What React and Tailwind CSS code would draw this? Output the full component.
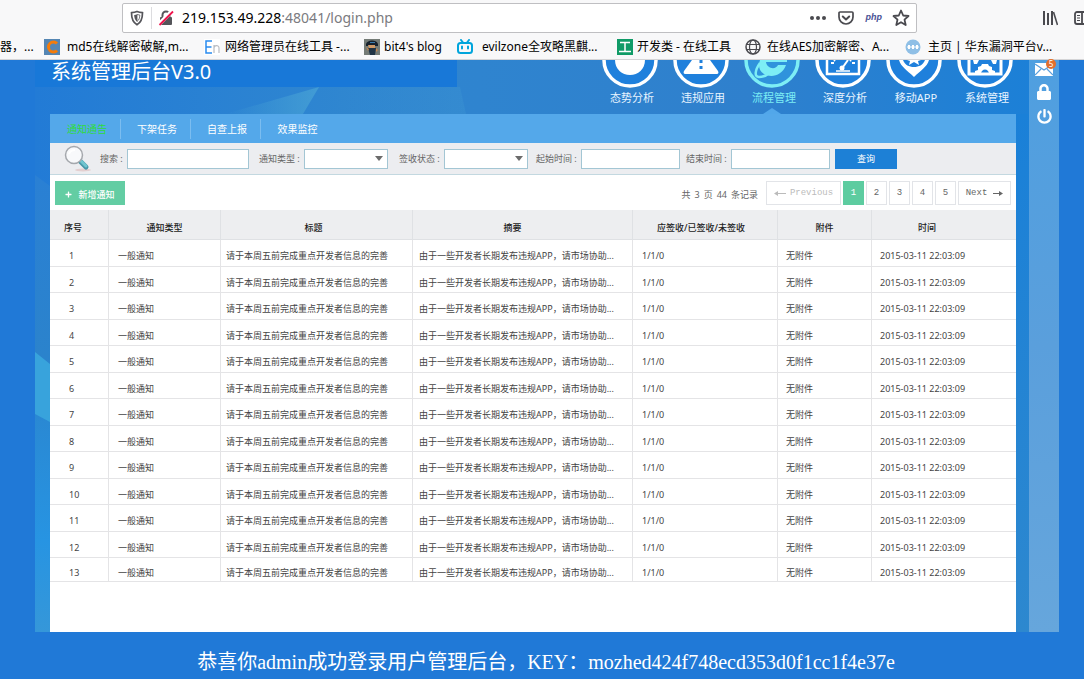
import { useState } from 'react'
import { FaLock, FaPowerOff, FaPlus } from 'react-icons/fa'

const bookmarks = [
  { icon: 'c', title: 'md5在线解密破解,m...', className: 'w-40 gap-[7px]' },
  { icon: 'en', title: '网络管理员在线工具 -...', className: 'w-40 gap-[5px]' },
  { icon: 'blog', title: "bit4's blog", className: 'w-[93px] gap-1' },
  { icon: 'tv', title: 'evilzone全攻略黑麒...', className: 'w-40 gap-[9px]' },
  { icon: 'gong', title: '开发类 - 在线工具', className: 'w-32 gap-1' },
  { icon: 'globe', title: '在线AES加密解密、A...', className: 'w-40 gap-[6px]' },
  { icon: 'dots', title: '主页 | 华东漏洞平台v...', className: 'w-40 gap-[7px]' },
]

const modules = [
  { icon: 'trend', label: '态势分析' },
  { icon: 'warning', label: '违规应用' },
  { icon: 'flow', label: '流程管理' },
  { icon: 'gauge', label: '深度分析' },
  { icon: 'mobile', label: '移动APP' },
  { icon: 'system', label: '系统管理' },
]

const tabs = ['通知通告', '下架任务', '自查上报', '效果监控']

const columns = [
  { title: '序号', className: 'w-[58px] pl-[14px] text-left' },
  { title: '通知类型', className: 'w-[112px] border-l' },
  { title: '标题', className: 'w-[192px] border-l pr-[6px]' },
  { title: '摘要', className: 'w-[220px] border-l pr-5' },
  { title: '应签收/已签收/未签收', className: 'w-[145px] border-l pr-2' },
  { title: '附件', className: 'w-[94px] border-l' },
  { title: '时间', className: 'border-l pr-[34px]' },
]

const notices = Array.from({ length: 13 }, (_, i) => ({
  id: i + 1,
  type: '一般通知',
  title: '请于本周五前完成重点开发者信息的完善',
  summary: '由于一些开发者长期发布违规APP，请市场协助...',
  signed: '1/1/0',
  attachment: '无附件',
  time: '2015-03-11 22:03:09',
}))

function BookmarkIcon({ name }) {
  return (
    <svg className="size-4 shrink-0" viewBox="0 0 16 16" fill="none">
      {name === 'c' && (
        <>
          <rect width="16" height="16" fill="#5586b3" />
          <path d="M13 4.500A4.800 4.800 0 0 0 9.500 3a5 5 0 0 0 0 10A4.800 4.800 0 0 0 13 11.500" stroke="#f57c0a" strokeWidth="3" />
        </>
      )}
      {name === 'en' && (
        <>
          <rect width="16" height="16" fill="#fff" />
          <path d="M8 2H2v12h6M2 8h5.500" stroke="#2a8cf0" strokeWidth="1.500" />
          <path d="M10 14V6M10 9c0-3 5-3.500 5 0v5" stroke="#b9bcc2" strokeWidth="1.200" />
        </>
      )}
      {name === 'blog' && (
        <>
          <rect width="16" height="16" fill="#747b76" />
          <path d="M2 5c1-4 10-5 12 0v2H2z" fill="#17222e" />
          <path d="M4 6h7v3H5z" fill="#d09a67" />
          <path d="M4 9h8l-1 7H6z" fill="#1f3345" />
          <path d="M2 8l3 2-1 2zM12 9l2 2-2 2z" fill="#c4854f" />
          <path d="M6 3h5v1H6z" fill="#3a7bad" />
        </>
      )}
      {name === 'tv' && (
        <>
          <rect x="1" y="4" width="14" height="10" rx="2.500" stroke="#00a5dc" strokeWidth="2" />
          <path d="M4 1l2 2.500M12 1l-2 2.500M5 7.500v2M11 7.500v2" stroke="#00a5dc" strokeWidth="2" strokeLinecap="round" />
        </>
      )}
      {name === 'gong' && (
        <>
          <rect width="16" height="16" fill="#109b67" />
          <path d="M3 3.500h10M8 3.500v9M2 12.500h12" stroke="#fff" strokeWidth="1.500" />
        </>
      )}
      {name === 'globe' && (
        <>
          <circle cx="8" cy="8" r="7" stroke="#4a4a4f" strokeWidth="1.500" />
          <ellipse cx="8" cy="8" rx="3.500" ry="7" stroke="#4a4a4f" strokeWidth="1.200" />
          <path d="M1.500 5.500h13M1.500 10.500h13" stroke="#4a4a4f" strokeWidth="1.200" />
        </>
      )}
      {name === 'dots' && (
        <>
          <circle cx="8" cy="8" r="7.500" fill="#8fbfe6" />
          <path d="M2 8h12" stroke="#fff" strokeWidth="1" />
          <path d="M4 6v4M8 6v4M12 6v4" stroke="#fff" strokeWidth="2" />
        </>
      )}
    </svg>
  )
}

// only the lower half of each round badge is on screen
function ModuleIcon({ name }) {
  const color = name === 'flow' ? '#7deef5' : '#fff'
  return (
    <svg className="block h-7 w-14" viewBox="0 0 56 28" fill="none">
      <circle cx="28" cy="0" r="26" fill={name === 'flow' ? '#2f93dc' : '#1f80dc'} stroke={color} strokeWidth="3.500" />
      {name === 'trend' && <path d="M13 0h30c0 9-7 15-15 15S13 9 13 0z" fill={color} />}
      {name === 'warning' && (
        <>
          <path d="M19 0h18l8 11c1 2 0 3-1 3H12c-1 0-2-1-1-3z" fill={color} />
          <path d="M28 0v3M28 6v3" stroke="#1f80dc" strokeWidth="3" />
        </>
      )}
      {name === 'flow' && (
        <>
          <path d="M16 0h27v2H22c1 7 10 8 12 3h8c-4 11-15 13-22 9-5-3-6-8-4-14z" fill={color} />
          <path d="M16 3c-5 7-6 14-1 14 4 0 8-2 10-4" stroke={color} strokeWidth="2.500" />
        </>
      )}
      {name === 'gauge' && (
        <>
          <path d="M12 0v14h32V0" stroke={color} strokeWidth="2.500" />
          <path d="M16 3h3M37 3h3M19 0l1 1M36 0l-1 1" stroke={color} strokeWidth="2" />
          <path d="M33 0l-5 7" stroke={color} strokeWidth="2" />
          <circle cx="27" cy="8" r="2.500" fill={color} />
          <path d="M21 11h14" stroke={color} strokeWidth="1.500" />
        </>
      )}
      {name === 'mobile' && (
        <>
          <path d="M13 0c2 7 8 10 15 17C35 10 41 7 43 0h-4c-2 5-6 7-11 7S19 5 17 0z" fill={color} />
          <path d="M21 0h14l-3 1 1 4-5-3-5 3 1-4z" fill={color} />
        </>
      )}
      {name === 'system' && (
        <>
          <path d="M12 0v14h32V0" stroke={color} strokeWidth="3" />
          <path d="M18 14v-3l3-1v-3l3-1 1-2h6l1 2 3 1v3l3 1v3h-6c0-6-8-6-8 0z" fill={color} />
          <path d="M16 0h6l-2 4h-3zM34 0h6l-1 4h-3z" fill={color} />
        </>
      )}
    </svg>
  )
}

function BrowserBar() {
  return (
    <div className="border-b border-[#d4d4d6] bg-[#f8f8f9] font-['Noto_Sans','Noto_Sans_CJK_SC',sans-serif] text-black">
      <div className="flex h-[35px] items-center overflow-hidden pl-[122px]">
        <div className="flex h-[30px] min-w-0 flex-1 items-center rounded-xs border border-[#bfbfc2] bg-white pr-[6px] pl-[6px]">
          <svg className="size-4 shrink-0" viewBox="0 0 16 16" fill="none">
            <path d="M8 1.500c2 .8 3.500 1 5.500 1.200 0 6-1 9.500-5.500 12-4.500-2.500-5.500-6-5.500-12 2-.2 3.500-.4 5.500-1.200z" stroke="#55555a" strokeWidth="1.700" />
            <path d="M8 4.500v7c-2.200-1.600-2.700-3.500-2.800-6.500z" fill="#55555a" />
            <path d="M8 4.500v7c2.200-1.600 2.700-3.500 2.800-6.500z" stroke="#55555a" strokeWidth=".8" />
          </svg>
          <span className="mx-[6px] h-[22px] w-px bg-[#dcdcdf]" />
          <svg className="size-4 shrink-0" viewBox="0 0 16 16" fill="none">
            <path d="M4.500 8V5a3.500 3.500 0 0 1 7 0v3" stroke="#55555a" strokeWidth="2" />
            <rect x="2" y="7" width="12" height="8" rx="1" fill="#55555a" />
            <path d="M1 14L14 1" stroke="#fff" strokeWidth="4" />
            <path d="M1.500 15L15 1.500" stroke="#f0134d" strokeWidth="1.800" />
          </svg>
          <div
            role="textbox"
            aria-label="地址"
            contentEditable
            suppressContentEditableWarning
            className="ml-2 min-w-0 flex-1 truncate text-sm text-[#7b7b80] outline-none"
          >
            <span className="text-black">219.153.49.228</span>:48041/login.php
          </div>
          <button type="button" aria-label="页面操作" className="mr-3 flex gap-[2px]">
            <span className="size-1 rounded-full bg-[#4a4a4f]" />
            <span className="size-1 rounded-full bg-[#4a4a4f]" />
            <span className="size-1 rounded-full bg-[#4a4a4f]" />
          </button>
          <button type="button" aria-label="保存到 Pocket" className="mr-3">
            <svg className="size-4" viewBox="0 0 16 16" fill="none" stroke="#4a4a4f" strokeWidth="2" strokeLinecap="round" strokeLinejoin="round">
              <path d="M2 2h12a1 1 0 0 1 1 1v4a7 7 0 0 1-14 0V3a1 1 0 0 1 1-1z" strokeWidth="1.700" />
              <path d="M4.800 6.500L8 9.500l3.200-3" />
            </svg>
          </button>
          <span className="mr-[10px] font-['Liberation_Sans',sans-serif] text-[9px] font-bold text-[#4a5295] italic">php</span>
          <button type="button" aria-label="收藏">
            <svg className="size-[18px]" viewBox="0 0 18 18" fill="none" stroke="#4a4a4f" strokeWidth="1.800" strokeLinejoin="round">
              <path d="M9 1.500l2.200 5 5.300.5-4 3.600 1.200 5.400L9 13.200 4.300 16l1.200-5.400-4-3.600 5.300-.5z" />
            </svg>
          </button>
        </div>
        <button type="button" aria-label="书库" className="ml-[125px]">
          <svg className="size-4" viewBox="0 0 16 16" stroke="#4a4a4f" strokeWidth="2">
            <path d="M2 1v14M6 3v12M10 1v14" />
            <path d="M11.500 2l4 13" strokeWidth="1.600" />
          </svg>
        </button>
        <button type="button" aria-label="侧栏" className="ml-4">
          <svg className="h-4 w-[10px]" viewBox="0 0 10 16" fill="none" stroke="#4a4a4f">
            <path d="M10 2H3a2 2 0 0 0-2 2v8a2 2 0 0 0 2 2h7M8 2v12" strokeWidth="1.800" />
            <path d="M3 5.500h3M3 8h3M3 10.500h3" strokeWidth="1.200" />
          </svg>
        </button>
      </div>
      <nav className="flex h-6 items-center overflow-hidden text-xs whitespace-nowrap">
        <a href="#" className="w-11 shrink-0 truncate [text-overflow:clip]">器，...</a>
        {bookmarks.map((b) => (
          <a key={b.icon} href="#" className={`flex shrink-0 items-center ${b.className}`}>
            <BookmarkIcon name={b.icon} />
            {b.title}
          </a>
        ))}
      </nav>
    </div>
  )
}

function Header() {
  return (
    <header className="flex h-[54px] items-start justify-between pr-[3px]">
      <h1 className="h-[27px] w-[422px] bg-[#1878d8] pl-4 text-xl leading-6 text-white">系统管理后台V3.0</h1>
      <nav className="flex gap-[15px]">
        {modules.map((m) => (
          <a
            key={m.icon}
            href="#"
            className={`relative flex h-[54px] w-14 flex-col items-center text-[11px] leading-5 ${m.icon === 'flow' ? 'text-[#7deef5]' : 'text-[#e8f4ff]'}`}
          >
            <ModuleIcon name={m.icon} />
            <span className="pl-1 whitespace-nowrap">{m.label}</span>
            {m.icon === 'flow' && (
              <svg className="absolute bottom-0 left-1/2 h-[6px] w-[18px] -translate-x-1/2" viewBox="0 0 18 6">
                <path d="M0 6l9-6 9 6z" fill="#52a7ea" />
              </svg>
            )}
          </a>
        ))}
      </nav>
    </header>
  )
}

function SelectField({ id, label }) {
  return (
    <div className="flex items-center">
      <label htmlFor={id} className="w-[45px]">{label} :</label>
      <div className="relative">
        <select id={id} className="h-5 w-[84px] appearance-none border border-[#a3c6d4] bg-white px-1">
          <option value=""></option>
        </select>
        <svg className="pointer-events-none absolute top-[7px] right-[5px] h-[5px] w-2" viewBox="0 0 8 5">
          <path d="M0 0h8L4 5z" fill="#6b6b6b" />
        </svg>
      </div>
    </div>
  )
}

function DateField({ id, label }) {
  return (
    <div className="flex items-center">
      <label htmlFor={id} className="w-[45px]">{label} :</label>
      <input id={id} type="text" className="h-5 w-[99px] border border-[#a3c6d4] bg-white px-1" />
    </div>
  )
}

function SearchBar() {
  return (
    <form
      className="flex h-8 items-center border-b border-[#c3d8e0] bg-[#ecedf0] pl-[14px] text-[9px] whitespace-nowrap text-[#666]"
      onSubmit={(e) => e.preventDefault()}
    >
      <svg className="h-[27px] w-7 shrink-0" viewBox="0 0 28 27" fill="none">
        <ellipse cx="19" cy="25" rx="8" ry="1.500" fill="#e3cfd0" />
        <path d="M15 15l7 7" stroke="#4797a8" strokeWidth="5" strokeLinecap="round" />
        <path d="M15 14l7 7" stroke="#6fc4cf" strokeWidth="3" strokeLinecap="round" />
        <circle cx="10" cy="10" r="8.500" fill="#f8f9fb" stroke="#a5a8ad" strokeWidth="1.500" />
        <path d="M5 9c1-3 3-4 6-4" stroke="#fff" strokeWidth="2" />
      </svg>
      <div className="mr-[10px] ml-2 flex items-center">
        <label htmlFor="keyword" className="w-[27px]">搜索 :</label>
        <input id="keyword" type="text" className="h-5 w-[122px] border border-[#a3c6d4] bg-white px-1" />
      </div>
      <div className="flex items-center gap-[11px]">
        <SelectField id="type" label="通知类型" />
        <SelectField id="status" label="签收状态" />
      </div>
      <div className="ml-2 flex items-center gap-[6px]">
        <DateField id="start" label="起始时间" />
        <DateField id="end" label="结束时间" />
      </div>
      <button type="submit" className="ml-[5px] h-5 w-[62px] bg-[#1d80d6] text-white">查询</button>
    </form>
  )
}

function Pagination({ page, setPage }) {
  return (
    <div className="flex items-center gap-[2px] font-['Liberation_Mono',monospace] text-[9px] text-[#666]">
      <p className="mr-[6px] flex gap-1 pt-1 font-['Noto_Sans','Noto_Sans_CJK_SC',sans-serif]">
        <span>共</span>
        <span>3</span>
        <span>页</span>
        <span>44</span>
        <span>条记录</span>
      </p>
      <button type="button" className="flex h-6 w-[75px] items-center justify-center gap-1 border border-[#e2e4e8] pt-[2px] text-[#bbb]">
        <svg className="h-[5px] w-3" viewBox="0 0 12 5" fill="currentColor"><path d="M0 2.500L4 0v2h8v1H4v2z" /></svg>
        Previous
      </button>
      {[1, 2, 3, 4, 5].map((n) => (
        <button
          key={n}
          type="button"
          onClick={() => setPage(n)}
          className={`h-6 w-[21px] border pt-[2px] ${n === page ? 'border-[#5dcca0] bg-[#5dcca0] text-white' : 'border-[#e2e4e8]'}`}
        >
          {n}
        </button>
      ))}
      <button type="button" className="flex h-6 w-[53px] items-center justify-center gap-[6px] border border-[#e2e4e8] pt-[2px]">
        Next
        <svg className="h-[5px] w-[10px]" viewBox="0 0 10 5" fill="currentColor"><path d="M10 2.500L6 0v2H0v1h6v2z" /></svg>
      </button>
    </div>
  )
}

function NoticeTable() {
  return (
    <table className="w-full table-fixed border-separate border-spacing-0 text-[9px] leading-[14px] text-[#444]">
      <thead>
        <tr className="h-[30px] bg-[#edeef0] text-[#222]">
          {columns.map((c) => (
            <th key={c.title} className={`border-b border-[#dfe1e4] pt-[6px] font-medium ${c.className}`}>{c.title}</th>
          ))}
        </tr>
      </thead>
      <tbody className="whitespace-nowrap [&_td]:border-b [&_td]:border-[#e4e4e6] [&_td]:pt-[6px] [&_td+td]:border-l">
        {notices.map((n) => (
          <tr key={n.id} className="h-[27px] even:h-[26px] last:h-6">
            <td className="pl-[19px]">{n.id}</td>
            <td className="pl-[9px]">{n.type}</td>
            <td className="pl-[5px]">{n.title}</td>
            <td className="pl-[6px]">{n.summary}</td>
            <td className="pl-[9px]">{n.signed}</td>
            <td className="pl-2">{n.attachment}</td>
            <td className="pl-2">{n.time}</td>
          </tr>
        ))}
      </tbody>
    </table>
  )
}

function SideBar() {
  return (
    <aside className="relative flex w-[30px] shrink-0 flex-col items-center bg-linear-to-b from-[#4f9fe0] via-[#5a9fdc] to-[#66a6dc] text-white">
      <button type="button" aria-label="消息" className="relative h-4 w-[18px]">
        <svg className="h-[15px] w-[18px]" viewBox="0 0 18 15" fill="none">
          <path d="M0 2h18v13H0z" fill="#fff" />
          <path d="M0 3l9 6 9-6M0 14l6-6M18 14l-6-6" stroke="#5a9fdc" strokeWidth="1.200" />
        </svg>
        <span className="absolute -top-px -right-[3px] size-[10px] rounded-full bg-[#e2702c] text-[8px] leading-[10px]">5</span>
      </button>
      <button type="button" aria-label="锁定" className="mt-2">
        <FaLock className="h-4 w-[14px]" />
      </button>
      <button type="button" aria-label="退出" className="mt-[9px]">
        <FaPowerOff className="size-[15px]" />
      </button>
    </aside>
  )
}

export default function App() {
  const [tab, setTab] = useState(tabs[0])
  const [page, setPage] = useState(1)

  return (
    <div className="flex min-h-screen flex-col bg-[#2079d7]">
      <BrowserBar />
      <main className="relative mr-[25px] ml-[35px] flex flex-1 font-['Noto_Sans','Noto_Sans_CJK_SC',sans-serif]">
        <svg className="absolute inset-0 size-full" viewBox="0 0 1024 572" preserveAspectRatio="none">
          <defs>
            <linearGradient id="sky" x1="0" y1="0" x2="1" y2="0">
              <stop offset="0" stopColor="#227bd6" />
              <stop offset=".3" stopColor="#2f86d0" />
              <stop offset=".7" stopColor="#2f80cd" />
              <stop offset="1" stopColor="#1a80d8" />
            </linearGradient>
            <linearGradient id="edge" x1="0" y1="0" x2="0" y2="1">
              <stop offset="0" stopColor="#2a80d4" />
              <stop offset=".4" stopColor="#2b83cc" />
              <stop offset=".8" stopColor="#2794e2" />
              <stop offset="1" stopColor="#3597d9" />
            </linearGradient>
            <linearGradient id="gutter" x1="0" y1="0" x2="0" y2="1">
              <stop offset="0" stopColor="#1a80d8" />
              <stop offset="1" stopColor="#2d88cf" />
            </linearGradient>
            <linearGradient id="ray" x1="0" y1="0" x2="1" y2="0">
              <stop offset="0" stopColor="#4aa5d6" stopOpacity="0" />
              <stop offset="1" stopColor="#4aa5d6" />
            </linearGradient>
          </defs>
          <rect width="1024" height="572" fill="url(#sky)" />
          <path d="M0 115l15 11v446H0z" fill="url(#edge)" />
          <path d="M0 292l15 12v58l-15-8z" fill="#38a3dc" />
          <path d="M190 54L284 27l-16 27z" fill="url(#ray)" opacity=".7" />
          <path d="M300 27h125l6 27H300z" fill="url(#ray)" opacity=".2" />
          <path d="M981 54h13v518h-13z" fill="url(#gutter)" />
        </svg>
        <div className="relative mr-[13px] flex min-w-0 flex-1 flex-col">
          <Header />
          <section className="ml-[15px] flex-1 bg-white">
            <div className="flex h-[29px] items-center bg-[#54a8ea] pl-px text-[10px] text-white">
              {tabs.map((t) => (
                <button
                  key={t}
                  type="button"
                  onClick={() => setTab(t)}
                  className={`h-5 w-[70px] border-r border-[#7bbdf0] pt-px pl-[3px] last:border-r-0 ${t === tab ? 'text-[#2fdc3c]' : ''}`}
                >
                  {t}
                </button>
              ))}
            </div>
            <SearchBar />
            <div className="flex h-[35px] items-center justify-between pr-[5px] pl-[5px]">
              <button type="button" className="flex h-6 w-[70px] items-center justify-center gap-[6px] bg-[#63cda3] pt-1 text-[9px] font-medium text-white">
                <FaPlus className="size-[7px]" />
                新增通知
              </button>
              <Pagination page={page} setPage={setPage} />
            </div>
            <NoticeTable />
          </section>
        </div>
        <SideBar />
      </main>
      <footer className="pt-[18px] pb-[5px] pl-2 text-center font-['Liberation_Serif','Noto_Sans_CJK_SC',serif] text-xl leading-6 text-white">
        恭喜你admin成功登录用户管理后台，KEY：mozhed424f748ecd353d0f1cc1f4e37e
      </footer>
    </div>
  )
}
